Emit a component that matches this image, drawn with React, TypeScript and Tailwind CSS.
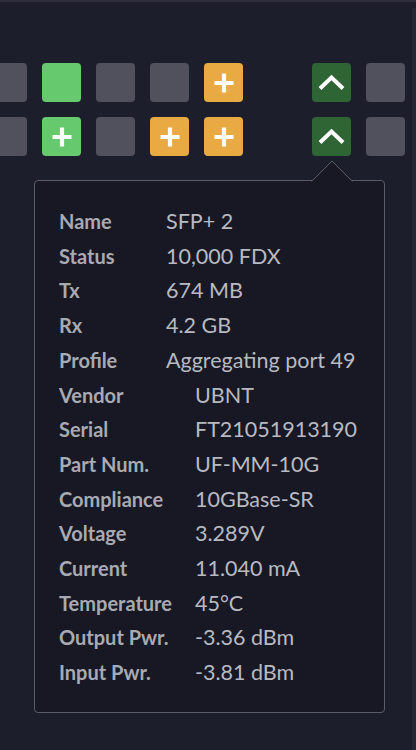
import React from "react";

type Port = "gray" | "green" | "greenPlus" | "orangePlus" | "uplink" | "empty";

const topRow: Port[] = ["gray", "green", "gray", "gray", "orangePlus", "empty", "uplink", "gray"];
const bottomRow: Port[] = ["gray", "greenPlus", "gray", "orangePlus", "orangePlus", "empty", "uplink", "gray"];

function Plus() {
  return (
    <svg width="20" height="20" viewBox="0 0 20 20">
      <path d="M10 0.5V19.5M0.5 10H19.5" stroke="#fff" strokeWidth="4.2" />
    </svg>
  );
}

function Chevron() {
  return (
    <svg width="27" height="17" viewBox="0 0 27 17">
      <path d="M2 14.5L13.5 3.5L25 14.5" stroke="#fff" strokeWidth="4" fill="none" />
    </svg>
  );
}

function PortBox({ kind }: { kind: Port }) {
  if (kind === "empty") return <div className="w-[39px] h-[39px] shrink-0" />;
  const bg =
    kind === "gray"
      ? "bg-[#50515c]"
      : kind === "green" || kind === "greenPlus"
      ? "bg-[#66c96e]"
      : kind === "orangePlus"
      ? "bg-[#e9a943]"
      : "bg-[#2f6434]";
  return (
    <div className={`w-[39px] h-[39px] shrink-0 rounded-[4px] ${bg} flex items-center justify-center`}>
      {(kind === "greenPlus" || kind === "orangePlus") && <Plus />}
      {kind === "uplink" && <Chevron />}
    </div>
  );
}

const firstRows: [string, string][] = [
  ["Name", "SFP+ 2"],
  ["Status", "10,000 FDX"],
  ["Tx", "674 MB"],
  ["Rx", "4.2 GB"],
  ["Profile", "Aggregating port 49"],
];

const moduleRows: [string, string][] = [
  ["Vendor", "UBNT"],
  ["Serial", "FT21051913190"],
  ["Part Num.", "UF-MM-10G"],
  ["Compliance", "10GBase-SR"],
  ["Voltage", "3.289V"],
  ["Current", "11.040 mA"],
  ["Temperature", "45°C"],
  ["Output Pwr.", "-3.36 dBm"],
  ["Input Pwr.", "-3.81 dBm"],
];

function InfoGrid({ rows, cols }: { rows: [string, string][]; cols: string }) {
  return (
    <div className={`grid ${cols} leading-[34.7px]`}>
      {rows.map(([k, v]) => (
        <React.Fragment key={k}>
          <div className="font-bold text-[20px] text-[#a9aab1] whitespace-nowrap">{k}</div>
          <div className="text-[21.5px] text-[#b9bac1] whitespace-nowrap">{v}</div>
        </React.Fragment>
      ))}
    </div>
  );
}

export default function App() {
  return (
    <div
      className="w-[416px] h-[750px] bg-[#1d1e2b] flex flex-col overflow-hidden"
      style={{ fontFamily: "Lato, 'Open Sans', sans-serif" }}
    >
      <div className="h-[2px] bg-[#2e2f3b] shrink-0" />
      <div className="flex flex-1 min-h-0">
        <div className="flex-1 min-w-0 relative">
          <div className="flex flex-col gap-[15px] pt-[61px] -ml-[12px]">
            <div className="flex gap-[15px]">
              {topRow.map((p, i) => (
                <PortBox key={i} kind={p} />
              ))}
            </div>
            <div className="flex gap-[15px]">
              {bottomRow.map((p, i) => (
                <PortBox key={i} kind={p} />
              ))}
            </div>
          </div>

          <div className="relative mt-[24px] ml-[34px] w-[351px] border border-[#5a5c67] rounded-[4px] bg-[#171824] pl-[24px] pt-[23px] pb-[22px]">
            <svg
              className="absolute left-[276px] -top-[21px]"
              width="42"
              height="22"
              viewBox="0 0 42 22"
            >
              <path d="M0 21H1L21 1L41 21H42" stroke="#5a5c67" strokeWidth="1" fill="#171824" />
              <rect x="1.5" y="21" width="39" height="1" fill="#171824" />
            </svg>
            <InfoGrid rows={firstRows} cols="grid-cols-[107px_1fr]" />
            <InfoGrid rows={moduleRows} cols="grid-cols-[136px_1fr]" />
          </div>
        </div>
        <div className="w-[4px] mt-[6px] bg-[#262733] shrink-0" />
      </div>
    </div>
  );
}
